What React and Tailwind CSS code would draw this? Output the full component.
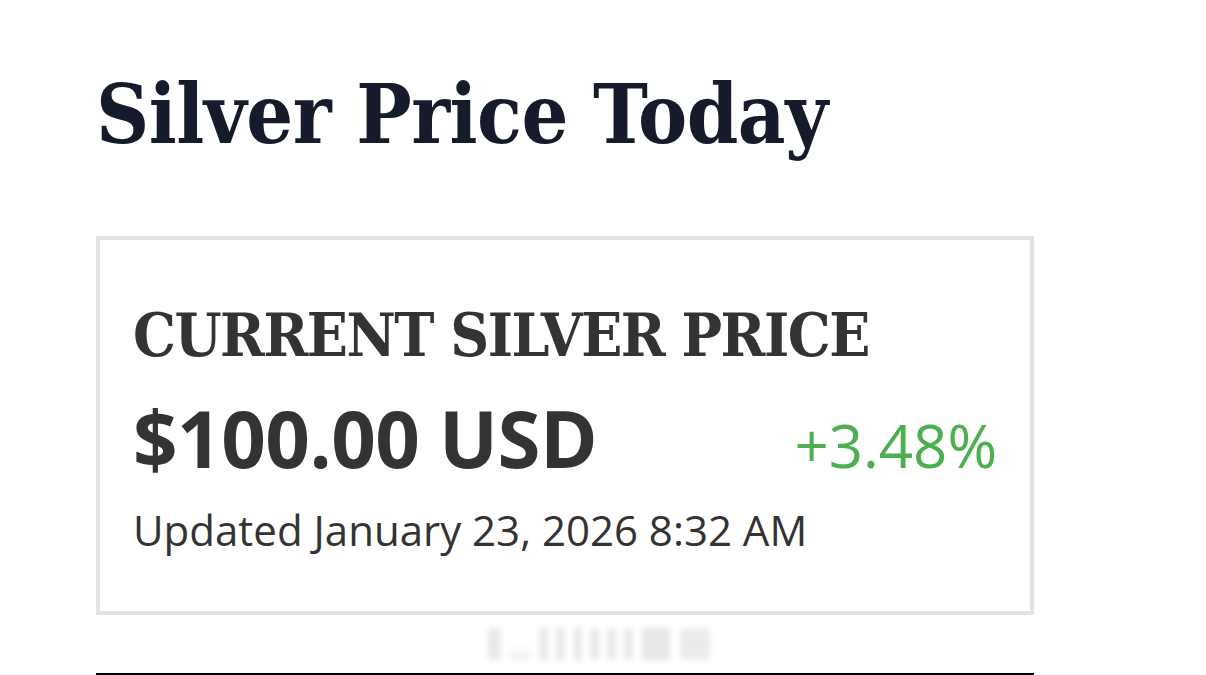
import React from 'react'

const slab = { fontFamily: '"DejaVu Serif Condensed", "DejaVu Serif", "Liberation Serif", serif' }
const sans = { fontFamily: '"Open Sans", "Noto Sans", sans-serif' }

function PriceCard() {
  return (
    <div className="border-4 border-[#e3e3e3] bg-white px-[33px] pt-[60px] pb-[53px]">
      <h2 style={slab} className="text-[60px] leading-[70px] font-bold text-[#333333] tracking-[-1.5px] uppercase">
        Current Silver Price
      </h2>
      <div style={sans} className="mt-[23px] flex items-baseline justify-between">
        <span className="text-[78px] leading-[90px] font-bold text-[#333333] tracking-[-0.5px]">$100.00 USD</span>
        <span className="text-[60px] leading-[90px] text-[#4caf50]">+3.48%</span>
      </div>
      <p style={sans} className="mt-[12px] text-[42px] leading-[56px] text-[#333333]">
        Updated January 23, 2026 8:32 AM
      </p>
    </div>
  )
}

export default function App() {
  return (
    <div className="min-h-[675px] w-[1206px] bg-white overflow-hidden">
      <div className="ml-[96px] w-[938px] pt-[64px]">
        <h1 style={slab} className="text-[82px] leading-[100px] font-bold text-[#151b2b] tracking-[-0.5px]">
          Silver Price Today
        </h1>
        <div className="mt-[72px]">
          <PriceCard />
        </div>
        {/* blurred watermark */}
        <div className="flex h-[58px] items-center">
          <div className="ml-[392px] flex items-end gap-[10px] blur-[3px] opacity-50">
            <div className="h-[32px] w-[12px] bg-[#d0d0d0]" />
            <div className="h-[10px] w-[20px] bg-[#e4e4e4]" />
            <div className="h-[32px] w-[7px] bg-[#c8c8c8]" />
            <div className="h-[32px] w-[7px] bg-[#c8c8c8]" />
            <div className="h-[32px] w-[7px] bg-[#c8c8c8]" />
            <div className="h-[32px] w-[7px] bg-[#c8c8c8]" />
            <div className="h-[32px] w-[7px] bg-[#c8c8c8]" />
            <div className="h-[32px] w-[7px] bg-[#c8c8c8]" />
            <div className="h-[32px] w-[28px] bg-[#d0d0d0]" />
            <div className="h-[32px] w-[30px] bg-[#d8d8d8]" />
          </div>
        </div>
        <div className="h-[3px] bg-black" />
      </div>
    </div>
  )
}
